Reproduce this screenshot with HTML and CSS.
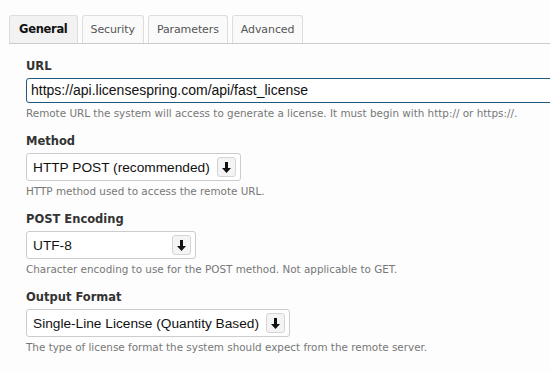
FILE: index.html
```html
<!DOCTYPE html>
<html lang="en">
<head>
    <meta charset="UTF-8">
    <title>License Settings</title>
    <link rel="stylesheet" href="styles.css">
</head>
<body>
    <div class="tabs">
        <div class="tab active">General</div>
        <div class="tab">Security</div>
        <div class="tab">Parameters</div>
        <div class="tab">Advanced</div>
    </div>
    <div class="form">
        <div class="field">
            <div class="label">URL</div>
            <div class="text-input">https://api.licensespring.com/api/fast_license</div>
            <div class="help">Remote URL the system will access to generate a license. It must begin with http:// or https://.</div>
        </div>
        <div class="field">
            <div class="label">Method</div>
            <div class="select">
                <span class="value">HTTP POST (recommended)</span>
                <span class="arrow"><svg width="9" height="11" viewBox="0 0 9 11"><path d="M3 0h3v6h3l-4.5 5L0 6h3z" fill="#111"/></svg></span>
            </div>
            <div class="help">HTTP method used to access the remote URL.</div>
        </div>
        <div class="field">
            <div class="label">POST Encoding</div>
            <div class="select">
                <span class="value">UTF-8</span>
                <span class="arrow"><svg width="9" height="11" viewBox="0 0 9 11"><path d="M3 0h3v6h3l-4.5 5L0 6h3z" fill="#111"/></svg></span>
            </div>
            <div class="help">Character encoding to use for the POST method. Not applicable to GET.</div>
        </div>
        <div class="field">
            <div class="label">Output Format</div>
            <div class="select">
                <span class="value">Single-Line License (Quantity Based)</span>
                <span class="arrow"><svg width="9" height="11" viewBox="0 0 9 11"><path d="M3 0h3v6h3l-4.5 5L0 6h3z" fill="#111"/></svg></span>
            </div>
            <div class="help">The type of license format the system should expect from the remote server.</div>
        </div>
    </div>
</body>
</html>
```

FILE: styles.css
```css
body {
    margin: 0;
    background-color: #fdfdfd;
    font-family: 'DejaVu Sans', sans-serif;
    color: #333;
    overflow: hidden;
}
.tabs {
    display: flex;
    gap: 4px;
    margin-left: 9px;
    padding-top: 15px;
    border-bottom: 1px solid #cccccc;
}
.tab {
    height: 27px;
    line-height: 27px;
    padding: 0 8px;
    border: 1px solid #dddddd;
    border-bottom: none;
    border-radius: 3px 3px 0 0;
    font-size: 11px;
    letter-spacing: -0.1px;
    color: #555;
    background-color: #fafafa;
}
.tab.active {
    background-color: #f2f2f2;
    color: #111;
    font-weight: bold;
    font-size: 11.5px;
    letter-spacing: -0.3px;
    padding: 0 9px;
}
.form {
    padding: 14px 0 0 26px;
    display: flex;
    flex-direction: column;
    gap: 13px;
}
.field {
    display: flex;
    flex-direction: column;
}
.label {
    font-size: 11.5px;
    font-weight: bold;
    line-height: 16px;
    color: #333;
    margin-bottom: 4px;
}
.text-input {
    width: 560px;
    height: 23px;
    line-height: 23px;
    border: 1px solid #1d5a7e;
    border-radius: 3px;
    padding-left: 4px;
    font-family: 'Liberation Sans', Arial, sans-serif;
    font-size: 14px;
    color: #111;
    background-color: #fff;
}
.select {
    display: inline-flex;
    align-items: center;
    align-self: flex-start;
    gap: 7px;
    min-width: 158px;
    height: 26px;
    padding: 0 4px 0 6px;
    border: 1px solid #cccccc;
    border-radius: 3px;
    background-color: #fff;
    font-family: 'Liberation Sans', Arial, sans-serif;
    font-size: 13.7px;
    color: #111;
}
.value {
    flex: 1;
}
.arrow {
    display: flex;
    align-items: center;
    justify-content: center;
    width: 17px;
    height: 18px;
    border: 1px solid #d5d5d5;
    border-radius: 3px;
    background-color: #f4f4f4;
}
.help {
    margin-top: 3px;
    font-size: 10.4px;
    line-height: 14px;
    color: #777;
    white-space: nowrap;
}
```
